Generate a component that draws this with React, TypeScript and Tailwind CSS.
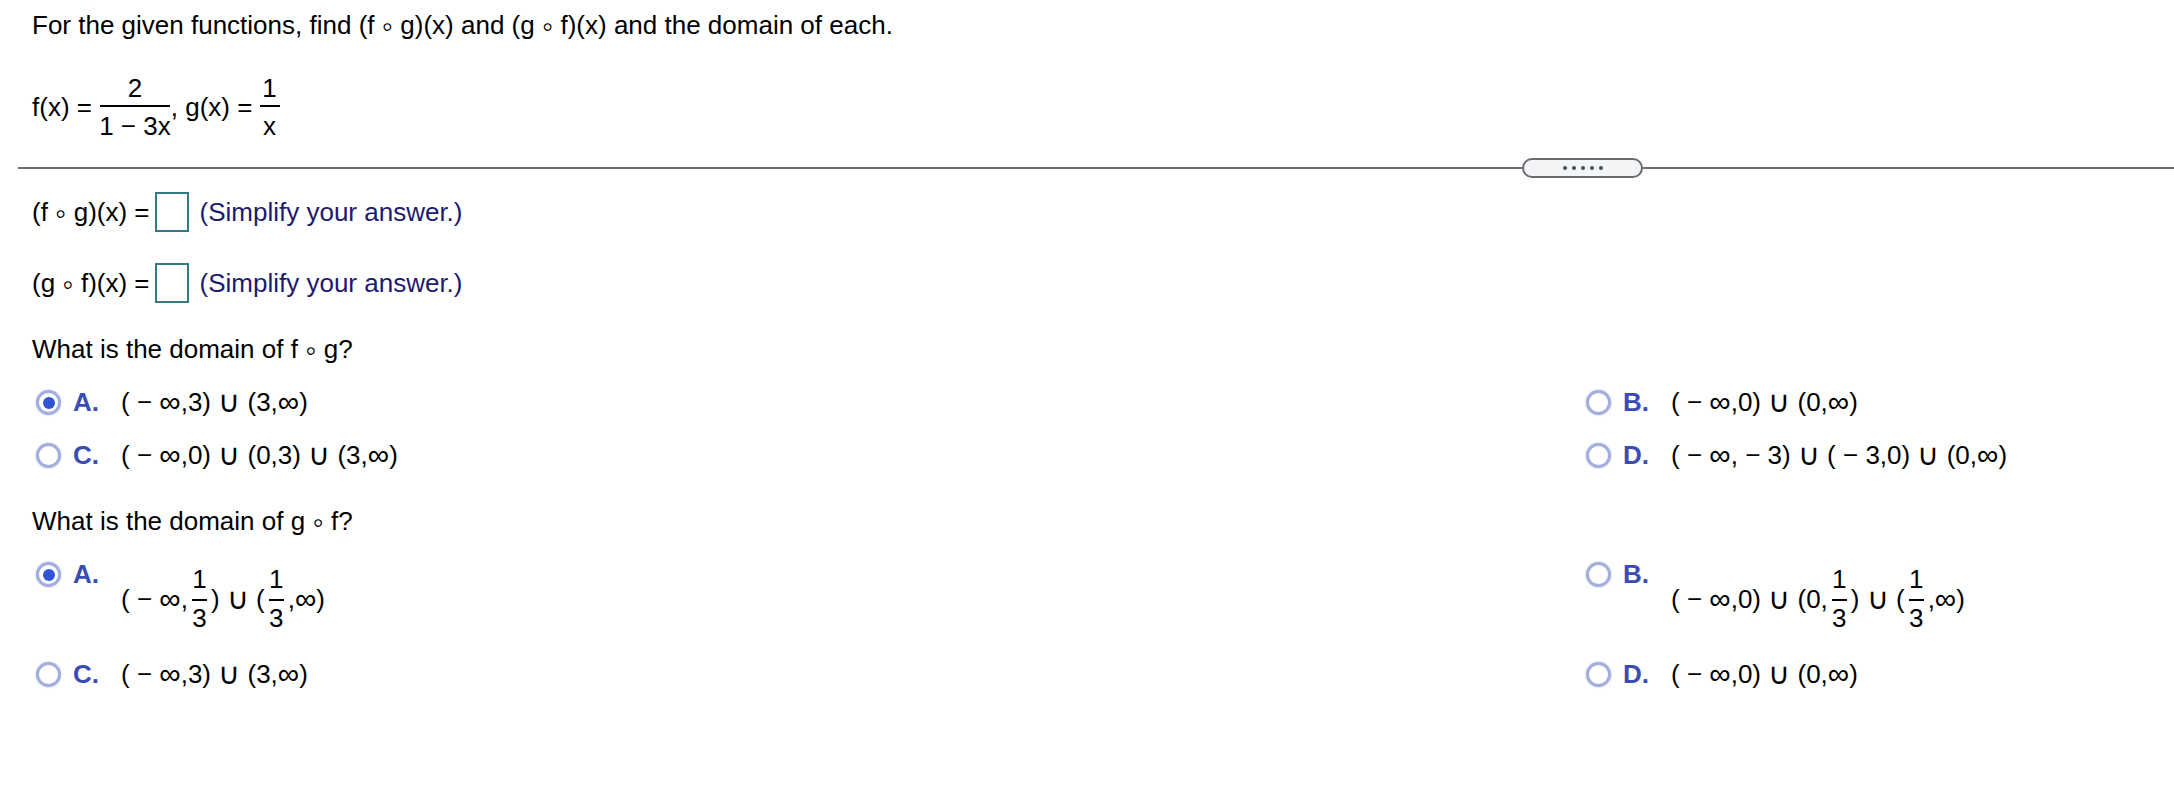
import type { ReactNode } from "react";

// composition ring, drawn a bit larger than the text font gives it
const Ring = () => <span className="align-[-3px] text-[32px] leading-[0px]">◦</span>;

// bigger glyphs for the math symbols, the text font draws them too small
function expr(s: string) {
    return s.split(/([∞∪])/).map((part, i) =>
        part === "∞" || part === "∪" ? (
            <span key={i} className="text-[30px] leading-[26px]">{part}</span>
        ) : (
            <span key={i}>{part}</span>
        )
    );
}

// fraction: numerator over a bar over denominator
function Frac({ num, den, barW, gapTop = 4, gapBottom = 6, className = "" }: { num: ReactNode; den: ReactNode; barW: string; gapTop?: number; gapBottom?: number; className?: string }) {
    return (
        <span className={`inline-flex flex-col items-center ${className}`}>
            <span className="leading-[26px]" style={{ marginBottom: gapTop }}>{num}</span>
            <span className={`h-[2px] bg-black ${barW}`} />
            <span className="leading-[26px] whitespace-pre" style={{ marginTop: gapBottom }}>{den}</span>
        </span>
    );
}

function Radio({ checked }: { checked?: boolean }) {
    return (
        <span className="mt-[1px] flex h-[25px] w-[25px] shrink-0 items-center justify-center rounded-full border-[3px] border-[#a2aedd] bg-white shadow-[0_0_2px_rgba(120,140,210,0.6)]">
            {checked && <span className="h-[12px] w-[12px] rounded-full bg-[#2f55d4]" />}
        </span>
    );
}

function Option({ letter, checked, children, offset }: { letter: string; checked?: boolean; children: ReactNode; offset?: boolean }) {
    return (
        <div className="flex items-start">
            <Radio checked={checked} />
            <span className="ml-[12px] w-[48px] shrink-0 font-bold text-[#3a4db5]">{letter}.</span>
            <div className={`flex items-center whitespace-pre ${offset ? "mt-[5px]" : ""}`}>{children}</div>
        </div>
    );
}

const OneThird = () => <Frac num="1" den="3" barW="w-[15px]" gapTop={7} gapBottom={4} className="mx-[4px]" />;

export default function App() {
    return (
        <div className="min-h-[799px] w-[2174px] overflow-hidden bg-white pl-[32px] pt-[12px] font-['Liberation_Sans',Arial,sans-serif] text-[26px] leading-[26px] text-black">
            <p>For the given functions, find (f <Ring /> g)(x) and (g <Ring /> f)(x) and the domain of each.</p>

            <div className="mt-[37px] flex items-center whitespace-pre">
                <span>f(x) = </span>
                <Frac num="2" den="1 − 3x" barW="w-[70px]" />
                <span>, g(x) = </span>
                <Frac num="1" den="x" barW="w-[20px]" />
            </div>

            {/* divider with the collapse pill */}
            <div className="-ml-[14px] mt-[19px] flex items-center">
                <div className="h-[2px] w-[1504px] bg-[#6b6f74]" />
                <div className="flex h-[20px] w-[121px] items-center justify-center gap-[5px] rounded-full border-2 border-[#686c71] bg-[#f3f4f6]">
                    <span className="h-[4px] w-[4px] rounded-full bg-[#4b5057]" />
                    <span className="h-[4px] w-[4px] rounded-full bg-[#4b5057]" />
                    <span className="h-[4px] w-[4px] rounded-full bg-[#4b5057]" />
                    <span className="h-[4px] w-[4px] rounded-full bg-[#4b5057]" />
                    <span className="h-[4px] w-[4px] rounded-full bg-[#4b5057]" />
                </div>
                <div className="h-[2px] flex-1 bg-[#6b6f74]" />
            </div>

            <div className="mt-[14px] flex items-center">
                <span>(f <Ring /> g)(x) =</span>
                <span className="ml-[5px] h-[40px] w-[34px] border-2 border-[#337a86]" />
                <span className="ml-[11px] text-[#1d1a6e]">(Simplify your answer.)</span>
            </div>

            <div className="mt-[31px] flex items-center">
                <span>(g <Ring /> f)(x) =</span>
                <span className="ml-[5px] h-[40px] w-[34px] border-2 border-[#337a86]" />
                <span className="ml-[11px] text-[#1d1a6e]">(Simplify your answer.)</span>
            </div>

            <p className="mt-[33px]">What is the domain of f <Ring /> g?</p>

            <div className="ml-[4px] mt-[27px] grid grid-cols-[1550px_1fr] gap-y-[27px]">
                <Option letter="A" checked>{expr("( − ∞,3) ∪ (3,∞)")}</Option>
                <Option letter="B">{expr("( − ∞,0) ∪ (0,∞)")}</Option>
                <Option letter="C">{expr("( − ∞,0) ∪ (0,3) ∪ (3,∞)")}</Option>
                <Option letter="D">{expr("( − ∞, − 3) ∪ ( − 3,0) ∪ (0,∞)")}</Option>
            </div>

            <p className="mt-[40px]">What is the domain of g <Ring /> f?</p>

            <div className="ml-[4px] mt-[27px] grid grid-cols-[1550px_1fr] gap-y-[30px]">
                <Option letter="A" checked offset>
                    {expr("( − ∞,")}
                    <OneThird />
                    {expr(") ∪ (")}
                    <OneThird />
                    {expr(",∞)")}
                </Option>
                <Option letter="B" offset>
                    {expr("( − ∞,0) ∪ (0,")}
                    <OneThird />
                    {expr(") ∪ (")}
                    <OneThird />
                    {expr(",∞)")}
                </Option>
                <Option letter="C">{expr("( − ∞,3) ∪ (3,∞)")}</Option>
                <Option letter="D">{expr("( − ∞,0) ∪ (0,∞)")}</Option>
            </div>
        </div>
    );
}
